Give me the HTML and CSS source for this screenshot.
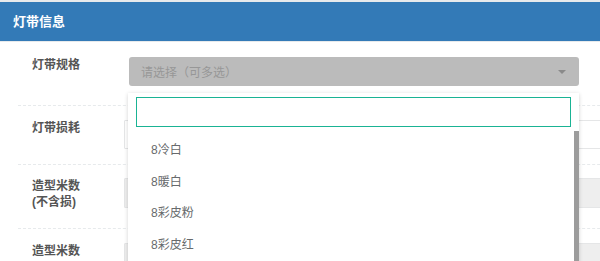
FILE: index.html
```html
<!DOCTYPE html>
<html lang="zh-CN">

<head>
    <meta charset="UTF-8">
    <meta name="viewport" content="width=device-width, initial-scale=1.0">
    <title>灯带信息</title>
    <link rel="stylesheet" href="styles.css">
</head>

<body>
    <div class="panel">
        <div class="panel-heading">灯带信息</div>
        <div class="panel-body">
            <div class="form-row row-first">
                <label class="row-label">灯带规格</label>
                <div class="row-field">
                    <div class="chosen">
                        <div class="chosen-single">
                            <span class="placeholder">请选择（可多选）</span>
                            <i class="caret"></i>
                        </div>
                        <!-- open dropdown -->
                        <div class="chosen-drop">
                            <div class="chosen-search"><input type="text"></div>
                            <div class="chosen-results">
                                <ul>
                                    <li>8冷白</li>
                                    <li>8暖白</li>
                                    <li>8彩皮粉</li>
                                    <li>8彩皮红</li>
                                </ul>
                                <div class="scrollbar"></div>
                            </div>
                        </div>
                    </div>
                </div>
            </div>

            <div class="form-row">
                <label class="row-label">灯带损耗</label>
                <div class="row-field">
                    <input type="text" class="form-control">
                </div>
            </div>

            <div class="form-row row-tall">
                <label class="row-label">造型米数<br>(不含损)</label>
                <div class="row-field">
                    <input type="text" class="form-control" disabled>
                </div>
            </div>

            <div class="form-row">
                <label class="row-label">造型米数</label>
                <div class="row-field">
                    <input type="text" class="form-control" disabled>
                </div>
            </div>
        </div>
    </div>
</body>

</html>
```

FILE: styles.css
```css
body {
    font-family: "Liberation Sans", "Noto Sans CJK SC", sans-serif;
    background-color: #fff;
    color: #676a6c;
    margin: 0;
    padding: 0;
    width: 600px;
    height: 261px;
    overflow: hidden;
}

.panel {
    width: 720px;
    border-top: 2px solid #e7eaec;
}

.panel-heading {
    height: 39px;
    line-height: 39px;
    padding-left: 13px;
    background-color: #337ab7;
    border-bottom: 1px solid #e7eaec;
    color: #fff;
    font-size: 13px;
    font-weight: bold;
}

.panel-body {
    padding-left: 18px;
}

.form-row {
    display: flex;
    padding: 14px 0 15px;
    border-bottom: 1px dashed #e7eaec;
}

.row-first {
    padding: 15px 0 19px;
}

.row-tall {
    padding: 13px 0 18px;
}

.row-label {
    width: 92px;
    padding-left: 14px;
    font-size: 12px;
    font-weight: bold;
    line-height: 16px;
    color: #555;
}

.row-field {
    flex: 1;
}

.form-control {
    display: block;
    width: 100%;
    height: 29px;
    margin: 0;
    padding: 4px 10px;
    border: 1px solid #e5e6e7;
    border-radius: 1px;
    background-color: #fff;
    box-sizing: border-box;
}

.form-control:disabled {
    height: 30px;
    background-color: #eee;
}

.chosen {
    position: relative;
    width: 450px;
    margin-left: 5px;
}

.chosen-single {
    display: flex;
    align-items: center;
    height: 29px;
    padding: 0 12px;
    background-color: #bbb;
    border-radius: 3px;
    box-sizing: border-box;
}

.placeholder {
    flex: 1;
    font-size: 12px;
    color: #979797;
}

.caret {
    width: 0;
    height: 0;
    margin-right: 1px;
    border-left: 4px solid transparent;
    border-right: 4px solid transparent;
    border-top: 4px solid #8a8a8a;
}

.chosen-drop {
    position: absolute;
    left: -1px;
    top: 36px;
    width: 451px;
    height: 200px;
    background-color: #fff;
    box-shadow: 0 1px 4px rgba(0, 0, 0, 0.18);
}

.chosen-search {
    padding: 4px 8px 0;
}

.chosen-search input {
    display: block;
    width: 100%;
    height: 30px;
    margin: 0;
    border: 1px solid #1ab394;
    box-sizing: border-box;
    outline: none;
}

.chosen-results {
    display: flex;
    margin-top: 4px;
    height: 140px;
}

.chosen-results ul {
    flex: 1;
    list-style: none;
    margin: 0;
    padding: 4px 0 0 23px;
}

.chosen-results li {
    height: 31.5px;
    line-height: 31.5px;
    font-size: 12px;
    color: #676a6c;
}

.scrollbar {
    width: 5px;
    background-color: #9c9c9c;
}
```
